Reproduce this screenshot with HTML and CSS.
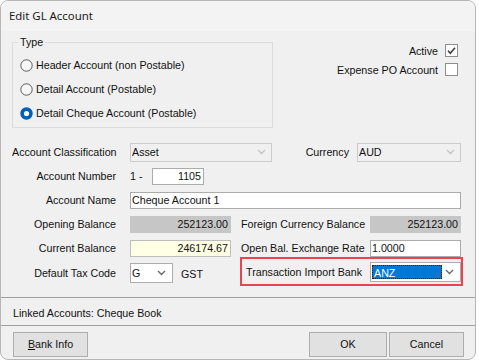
FILE: index.html
```html
<html>
<head>
    <title>Edit GL Account</title>
    <link rel="stylesheet" href="styles.css">
</head>
<body>

    <div class="window">
        <div class="titlebar">Edit GL Account</div>

        <div class="top">
            <div class="type-group">
                <span class="legend">Type</span>
                <div class="radio-list">
                    <div class="radio"><svg width="13" height="13" viewBox="0 0 13 13"><circle cx="6.5" cy="6.5" r="5.7" fill="#f7f7f7" stroke="#5a5a5a" stroke-width="1"/></svg>Header Account (non Postable)</div>
                    <div class="radio"><svg width="13" height="13" viewBox="0 0 13 13"><circle cx="6.5" cy="6.5" r="5.7" fill="#f7f7f7" stroke="#5a5a5a" stroke-width="1"/></svg>Detail Account (Postable)</div>
                    <div class="radio"><svg width="13" height="13" viewBox="0 0 13 13"><circle cx="6.5" cy="6.5" r="6.2" fill="#005fb8"/><circle cx="6.5" cy="6.5" r="2.6" fill="#fff"/></svg>Detail Cheque Account (Postable)</div>
                </div>
            </div>
            <div class="flags">
                <div class="flag">Active <span class="check"><svg width="11" height="11" viewBox="0 0 11 11"><path d="M2 5.8 L4.3 8.2 L9 2.8" fill="none" stroke="#3c3c3c" stroke-width="1.6"/></svg></span></div>
                <div class="flag">Expense PO Account <span class="check"></span></div>
            </div>
        </div>

        <div class="form">
            <span class="lbl">Account Classification</span>
            <div class="row-wide">
                <div class="combo disabled class-combo"><span>Asset</span><svg width="9" height="6" viewBox="0 0 9 6"><path d="M1 1 L4.5 4.5 L8 1" fill="none" stroke="#c2c2c2" stroke-width="1.3"/></svg></div>
                <span class="lbl-currency">Currency</span>
                <div class="combo disabled currency-combo"><span>AUD</span><svg width="9" height="6" viewBox="0 0 9 6"><path d="M1 1 L4.5 4.5 L8 1" fill="none" stroke="#c2c2c2" stroke-width="1.3"/></svg></div>
            </div>

            <span class="lbl">Account Number</span>
            <div class="row-wide">
                <span class="prefix">1 -</span>
                <div class="field num acct-no">1105</div>
            </div>

            <span class="lbl">Account Name</span>
            <div class="field row-wide">Cheque Account 1</div>

            <span class="lbl">Opening Balance</span>
            <div class="field num readonly col-a">252123.00</div>
            <span class="lbl2">Foreign Currency Balance</span>
            <div class="field num readonly col-b">252123.00</div>

            <span class="lbl">Current Balance</span>
            <div class="field num yellow col-a">246174.67</div>
            <span class="lbl2">Open Bal. Exchange Rate</span>
            <div class="field col-b">1.0000</div>

            <span class="lbl">Default Tax Code</span>
            <div class="tax-cell">
                <div class="combo tax-combo"><span>G</span><svg width="9" height="6" viewBox="0 0 9 6"><path d="M1 1 L4.5 4.5 L8 1" fill="none" stroke="#6a6a6a" stroke-width="1.4"/></svg></div>
                <span class="tax-name">GST</span>
            </div>
            <div class="highlight">
                <span>Transaction Import Bank</span>
                <div class="combo bank-combo"><span class="selected">ANZ</span><svg width="9" height="6" viewBox="0 0 9 6"><path d="M1 1 L4.5 4.5 L8 1" fill="none" stroke="#6a6a6a" stroke-width="1.4"/></svg></div>
            </div>
        </div>

        <div class="linked">Linked Accounts: Cheque Book</div>

        <div class="buttons">
            <div class="btn bank-btn"><u>B</u>ank Info</div>
            <div class="btn ok-btn">OK</div>
            <div class="btn cancel-btn">Cancel</div>
        </div>
    </div>

</body>
</html>
```

FILE: styles.css
```css
body { margin: 0; background: #fff; font-family: "Liberation Sans", Arial, sans-serif; font-size: 10.7px; color: #111; }
.window { width: 476px; height: 360px; box-sizing: border-box; border: 1px solid #b6b6b6; border-radius: 8px; background: #f0f0f0; overflow: hidden; display: flex; flex-direction: column; }
.titlebar { height: 30px; line-height: 30px; padding-left: 8px; background: #f3f3f3; font-family: "Noto Sans", sans-serif; font-size: 11.4px; color: #1a1a1a; }

.top { display: flex; padding-right: 17px; }
.type-group { width: 261px; height: 86px; box-sizing: border-box; margin: 11px 0 0 11px; border: 1px solid #dcdcdc; }
.legend { display: block; width: fit-content; margin: -7px 0 0 5px; padding: 0 2px; line-height: 13px; background: #f0f0f0; }
.radio-list { padding: 4px 0 0 7px; }
.radio { height: 24px; display: flex; align-items: center; gap: 3px; }
.radio svg { flex: none; }

.flags { margin-left: auto; margin-top: 10px; }
.flag { height: 19px; display: flex; align-items: center; justify-content: flex-end; gap: 7px; }
.check { width: 13px; height: 13px; box-sizing: border-box; border: 1px solid #8e8e8e; background: #fff; display: flex; align-items: center; justify-content: center; }

.form { display: grid; grid-template-columns: 104px 14px 101px 10px 121px 8px 91px; grid-template-rows: repeat(5, 24px) 26px; align-items: center; margin: 12px 0 0 11px; }
.lbl { grid-column: 1; text-align: right; white-space: nowrap; }
.lbl2 { grid-column: 5; white-space: nowrap; }
.row-wide { grid-column: 3 / 8; display: flex; align-items: center; }
.col-a { grid-column: 3; }
.col-b { grid-column: 7; }

.field { height: 17px; line-height: 15px; box-sizing: border-box; border: 1px solid #ababab; background: #fff; padding: 0 2px 0 1px; white-space: nowrap; }
.field.num { text-align: right; padding-right: 2px; }
.field.readonly { background: #c6c6c6; border-color: #c6c6c6; }
.field.yellow { background: #ffffe3; border-color: #bdbdbd; }
.prefix { width: 22px; }
.acct-no { width: 52px; }

.combo { height: 19px; box-sizing: border-box; border: 1px solid #adadad; background: #fff; display: flex; align-items: center; justify-content: space-between; padding: 0 5px 0 1px; }
.combo.disabled { border-color: #cccccc; background: #f0f0f0; }
.class-combo { width: 142px; }
.lbl-currency { margin-left: auto; margin-right: 8px; }
.currency-combo { width: 104px; }

.tax-cell { grid-column: 3; display: flex; align-items: center; gap: 8px; }
.tax-combo { width: 43px; height: 20px; padding-right: 6px; }
.tax-name { padding-top: 1px; }

.highlight { grid-column: 4 / 8; align-self: end; height: 29px; margin: 0 -2px 0 9px; box-sizing: border-box; border: 2px solid #e8464c; display: flex; align-items: center; justify-content: space-between; padding: 1px 0 0 4px; }
.bank-combo { width: 91px; height: 20px; padding-right: 6px; }
.bank-combo .selected { width: 70px; height: 14px; line-height: 14px; box-sizing: border-box; border: 1px dotted #222; background: #0078d7; color: #fff; padding-left: 1px; }

.linked { margin-top: 11px; border-top: 1px solid #a0a0a0; border-bottom: 1px solid #a0a0a0; height: 24px; line-height: 24px; padding: 3px 0 0 12px; }
.buttons { display: flex; padding: 6px 11px 0 12px; }
.btn { height: 25px; line-height: 23px; box-sizing: border-box; border: 1px solid #adadad; background: #e1e1e1; text-align: center; }
.bank-btn { width: 75px; }
.ok-btn { width: 78px; margin-left: auto; }
.cancel-btn { width: 75px; margin-left: 2px; }
```
